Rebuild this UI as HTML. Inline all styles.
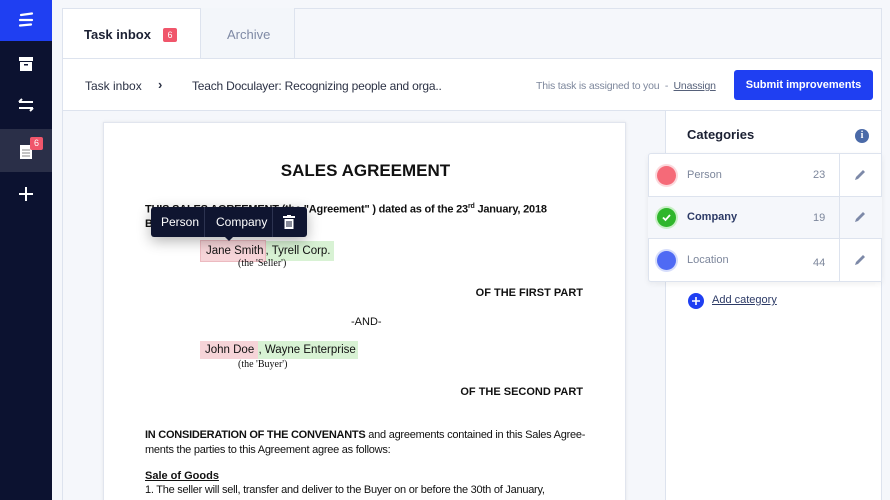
<!DOCTYPE html>
<html><head><style>
*{box-sizing:border-box;margin:0;padding:0}
html,body{width:890px;height:500px;overflow:hidden}
body{background:#f5f7fb;font-family:"Liberation Sans",sans-serif;position:relative}
.abs{position:absolute}
.sb{left:0;top:0;width:52px;height:500px;background:#0c1230}
.doc{font-size:11px;color:#111}
.b{font-weight:bold}
.pk{background:#f6d4d8}
.gr{background:#d8f2d4}
</style></head><body>
<div class="abs sb">
  <div class="abs" style="left:0;top:0;width:52px;height:41px;background:#1f3ff2"></div>
  <svg class="abs" style="left:17px;top:11px" width="18" height="18" viewBox="0 0 18 18"><path d="M4 4l11-1.5M3 9h12M3 14.5l11-1" stroke="#fff" stroke-width="2.2" stroke-linecap="round"/></svg>
  <svg class="abs" style="left:18px;top:56px" width="16" height="16" viewBox="0 0 16 16"><rect x="1" y="1" width="14" height="4" fill="#fff"/><rect x="2" y="6" width="12" height="9" fill="#fff"/><rect x="6" y="8" width="4" height="1.5" fill="#0c1230"/></svg>
  <svg class="abs" style="left:17px;top:98px" width="18" height="14" viewBox="0 0 18 14"><path d="M2 4h14M2 4l3-3M16 10H2M16 10l-3 3" stroke="#fff" stroke-width="2" fill="none"/></svg>
  <div class="abs" style="left:0;top:129px;width:52px;height:43px;background:#2a2f48"></div>
  <svg class="abs" style="left:19px;top:143px" width="14" height="16" viewBox="0 0 14 16"><rect x="1" y="2" width="12" height="14" fill="#fff"/><path d="M3 7h8M3 10h8M3 13h8" stroke="#888" stroke-width="1"/></svg>
  <div class="abs" style="left:30px;top:137px;width:13px;height:13px;background:#f0566b;border-radius:2px;color:#fff;font-size:9px;text-align:center;line-height:13px">6</div>
  <svg class="abs" style="left:18px;top:186px" width="16" height="16" viewBox="0 0 16 16"><path d="M8 1v14M1 8h14" stroke="#fff" stroke-width="2"/></svg>
</div>
<div class="abs" style="left:62px;top:8px;width:820px;height:492px;border:1px solid #dde3ee;border-bottom:none;background:#f5f7fb"></div>
<div class="abs" style="left:62px;top:8px;width:138px;height:51px;background:#fff;border-left:1px solid #dde3ee;border-top:1px solid #dde3ee"></div>
<div class="abs" style="left:84px;top:27px;font-size:13px;font-weight:bold;color:#1b2033">Task inbox</div>
<div class="abs" style="left:163px;top:28px;width:14px;height:14px;background:#f0566b;border-radius:2px;color:#fff;font-size:9px;text-align:center;line-height:14px">6</div>
<div class="abs" style="left:200px;top:8px;width:95px;height:51px;border-left:1px solid #dde3ee;border-right:1px solid #dde3ee;background:#f3f6fa"></div>
<div class="abs" style="left:227px;top:27px;font-size:13px;color:#7f8aa5">Archive</div>
<div class="abs" style="left:62px;top:58px;width:820px;height:53px;background:#fff;border:1px solid #dde3ee"></div>
<div class="abs" style="left:85px;top:79px;font-size:12px;color:#2c3245">Task inbox</div>
<div class="abs" style="left:158px;top:77px;font-size:13px;font-weight:bold;color:#2c3245">›</div>
<div class="abs" style="left:192px;top:79px;font-size:12px;color:#2c3245;letter-spacing:-0.2px">Teach Doculayer: Recognizing people and orga..</div>
<div class="abs" style="left:536px;top:80px;font-size:10.5px;color:#7d879c;letter-spacing:-0.2px">This task is assigned to you &nbsp;- &nbsp;<span style="text-decoration:underline;color:#56617a">Unassign</span></div>
<div class="abs" style="left:734px;top:70px;width:139px;height:30px;background:#1f3ff2;border-radius:3px;color:#fff;font-size:11px;font-weight:bold;text-align:center;line-height:30px">Submit improvements</div>
<div class="abs doc" style="left:103px;top:122px;width:523px;height:390px;background:#fff;border:1px solid #e1e5ee;box-shadow:0 0 3px rgba(0,0,0,.08)">
  <div class="abs b" style="left:0;width:523px;top:38px;text-align:center;font-size:17px">SALES AGREEMENT</div>
  <div class="abs b" style="left:41px;top:80px;font-size:11px;letter-spacing:-0.2px">THIS SALES AGREEMENT (the "Agreement" ) dated as of the 23<sup style="font-size:7px">rd</sup> January, 2018</div>
  <div class="abs b" style="left:41px;top:95px">B</div>
  <div class="abs" style="left:96px;top:118px;font-size:11.5px;line-height:21px;white-space:nowrap"><span class="pk" style="padding:4px 1px 4px 5px;border:1px solid #ecbac0">Jane Smith</span><span class="gr" style="padding:4px 3px 4px 0">, Tyrell Corp.</span></div>
  <div class="abs" style="left:134px;top:135px;font-family:'Liberation Serif',serif;font-size:10px">(the 'Seller')</div>
  <div class="abs b" style="right:42px;top:164px">OF THE FIRST PART</div>
  <div class="abs" style="left:247px;top:193px">-AND-</div>
  <div class="abs" style="left:96px;top:218px;font-size:11.5px;line-height:19px;white-space:nowrap"><span class="pk" style="padding:3px 1px 3px 5px">John Doe </span><span class="gr" style="padding:3px 2px 3px 0">, Wayne Enterprise</span></div>
  <div class="abs" style="left:134px;top:236px;font-family:'Liberation Serif',serif;font-size:10px">(the 'Buyer')</div>
  <div class="abs b" style="right:42px;top:263px">OF THE SECOND PART</div>
  <div class="abs" style="left:41px;top:305px;width:450px;line-height:15px;font-size:11px;letter-spacing:-0.25px"><b>IN CONSIDERATION OF THE CONVENANTS</b> and agreements contained in this Sales Agree-ments the parties to this Agreement agree as follows:</div>
  <div class="abs b" style="left:41px;top:347px;text-decoration:underline;font-size:11px">Sale of Goods</div>
  <div class="abs" style="left:41px;top:361px;font-size:11px;letter-spacing:-0.25px">1. The seller will sell, transfer and deliver to the Buyer on or before the 30th of January,</div>
</div>
<div class="abs" style="left:151px;top:207px;width:156px;height:30px;background:#0f1530;border-radius:3px;box-shadow:0 4px 14px rgba(0,0,0,.3);color:#fff;font-size:12px">
  <div class="abs" style="left:10px;top:8px">Person</div>
  <div class="abs" style="left:53px;top:0;width:1px;height:30px;background:#2c3350"></div>
  <div class="abs" style="left:65px;top:8px">Company</div>
  <div class="abs" style="left:121px;top:0;width:1px;height:30px;background:#2c3350"></div>
  <svg class="abs" style="left:132px;top:8px" width="12" height="14" viewBox="0 0 12 14"><rect x="0" y="1" width="12" height="2" fill="#fff"/><rect x="4" y="0" width="4" height="2" fill="#fff"/><path d="M1.5 4h9v10h-9z" fill="#fff"/><path d="M4 6v6M6 6v6M8 6v6" stroke="#0f1530" stroke-width="1"/></svg>
  <div class="abs" style="left:73px;top:29px;width:0;height:0;border-left:5px solid transparent;border-right:5px solid transparent;border-top:5px solid #0f1530"></div>
</div>
<div class="abs" style="left:665px;top:111px;width:217px;height:389px;background:#fff;border-left:1px solid #dde3ee;border-right:1px solid #dde3ee"></div>
<div class="abs" style="left:687px;top:127px;font-size:13px;font-weight:bold;color:#1b2033">Categories</div>
<div class="abs" style="left:855px;top:129px;width:14px;height:14px;border-radius:50%;background:#4a6aa8;color:#fff;font-size:10px;font-weight:bold;text-align:center;line-height:14px;font-family:'Liberation Serif',serif">i</div>
<div class="abs" style="left:648px;top:153px;width:234px;height:129px;background:#fff;border:1px solid #dde3ee;border-radius:3px 0 0 3px;box-shadow:0 2px 6px rgba(0,0,0,.06)"></div>
<div class="abs" style="left:648px;top:196px;width:234px;height:43px;background:#f5f7fb;border-top:1px solid #dde3ee;border-bottom:1px solid #dde3ee"></div>
<div class="abs" style="left:839px;top:153px;width:1px;height:129px;background:#dde3ee"></div>
<div class="abs" style="left:657px;top:166px;width:19px;height:19px;border-radius:50%;background:#f56a78;box-shadow:0 0 0 2px #fbd9dd"></div>
<div class="abs" style="left:657px;top:208px;width:19px;height:19px;border-radius:50%;background:#2fb62c;box-shadow:0 0 0 2px #c9efc7"></div>
<svg class="abs" style="left:661px;top:212px" width="11" height="11" viewBox="0 0 11 11"><path d="M2 5.5l2.5 2.5L9 3" stroke="#fff" stroke-width="1.8" fill="none"/></svg>
<div class="abs" style="left:657px;top:251px;width:19px;height:19px;border-radius:50%;background:#4f6af4;box-shadow:0 0 0 2px #d6ddfb"></div>
<div class="abs" style="left:687px;top:169px;font-size:11px;color:#7d879c">Person</div>
<div class="abs" style="left:687px;top:211px;font-size:11px;font-weight:bold;color:#2c3a66">Company</div>
<div class="abs" style="left:687px;top:254px;font-size:11px;color:#7d879c">Location</div>
<div class="abs" style="left:813px;top:169px;font-size:11px;color:#7d879c">23</div>
<div class="abs" style="left:813px;top:212px;font-size:11px;color:#7d879c">19</div>
<div class="abs" style="left:813px;top:257px;font-size:11px;color:#7d879c">44</div>
<svg class="abs" style="left:853px;top:168px" width="14" height="14" viewBox="0 0 14 14"><path d="M2 12l1-3 7-7 2 2-7 7z" fill="#7d89a8"/></svg>
<svg class="abs" style="left:853px;top:210px" width="14" height="14" viewBox="0 0 14 14"><path d="M2 12l1-3 7-7 2 2-7 7z" fill="#7d89a8"/></svg>
<svg class="abs" style="left:853px;top:253px" width="14" height="14" viewBox="0 0 14 14"><path d="M2 12l1-3 7-7 2 2-7 7z" fill="#7d89a8"/></svg>
<div class="abs" style="left:688px;top:293px;width:16px;height:16px;border-radius:50%;background:#1f3ff2"></div>
<svg class="abs" style="left:688px;top:293px" width="16" height="16" viewBox="0 0 16 16"><path d="M8 4v8M4 8h8" stroke="#fff" stroke-width="1.6"/></svg>
<div class="abs" style="left:712px;top:294px;font-size:11px;color:#2c3a66;text-decoration:underline">Add category</div>
</body></html>
